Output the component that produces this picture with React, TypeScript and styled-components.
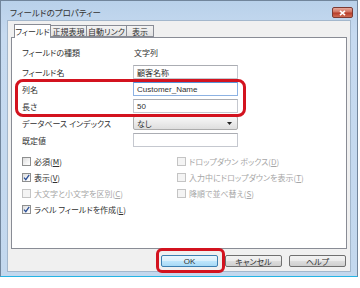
import styled, { createGlobalStyle } from "styled-components";

const GlobalStyle = createGlobalStyle`
  html, body {
    margin: 0;
    padding: 0;
    background: #ffffff;
  }
  body {
    font-family: "Noto Sans CJK JP", "Liberation Sans", sans-serif;
    font-size: 8px;
    color: #303030;
    font-feature-settings: "palt";
  }
`;

const fields = [
  { label: "フィールドの種類", kind: "text", value: "文字列" },
  { label: "フィールド名", kind: "input", value: "顧客名称" },
];

const highlighted = [
  { label: "列名", value: "Customer_Name", focused: true },
  { label: "長さ", value: "50", focused: false },
];

const leftChecks = [
  { text: "必須", key: "M", checked: false, disabled: false },
  { text: "表示", key: "V", checked: true, disabled: false },
  { text: "大文字と小文字を区別", key: "C", checked: false, disabled: true },
  { text: "ラベル フィールドを作成", key: "L", checked: true, disabled: false },
];

const rightChecks = [
  { text: "ドロップダウン ボックス", key: "D", checked: false, disabled: true },
  { text: "入力中にドロップダウンを表示", key: "T", checked: false, disabled: true },
  { text: "降順で並べ替え", key: "S", checked: false, disabled: true },
];

const tabs = [
  { label: "フィールド", width: 37, active: true },
  { label: "正規表現", width: 37, active: false },
  { label: "自動リンク", width: 41, active: false },
  { label: "表示", width: 28, active: false },
];

function Check({ text, k, checked, disabled }: { text: string; k: string; checked: boolean; disabled: boolean }) {
  return (
    <CheckRow $disabled={disabled}>
      <Box $disabled={disabled}>
        {checked ? (
          <svg width="7" height="7" viewBox="0 0 7 7">
            <path d="M1 3.6 L2.8 5.6 L6.2 0.9" fill="none" stroke="#2a4e96" strokeWidth="1.3" />
          </svg>
        ) : null}
      </Box>
      <span>
        {text}(<U>{k}</U>)
      </span>
    </CheckRow>
  );
}

function App() {
  return (
    <>
      <GlobalStyle />
      <Window>
        <TitleBar>
          <Title>フィールドのプロパティー</Title>
          <CloseButton>
            <svg width="7" height="6" viewBox="0 0 7 6">
              <path d="M1 0.8 L6 5.2 M6 0.8 L1 5.2" stroke="#ffffff" strokeWidth="1.6" />
            </svg>
          </CloseButton>
        </TitleBar>
        <Client>
          <TabRow>
            {tabs.map((t) => (
              <Tab key={t.label} $active={t.active} style={{ width: t.width }}>
                {t.label}
              </Tab>
            ))}
          </TabRow>
          <Panel>
            <Fields>
              {fields.map((f, i) => (
                <FieldRow key={f.label} $first={i === 0}>
                  <Label>{f.label}</Label>
                  {f.kind === "text" ? <Plain>{f.value}</Plain> : <Input>{f.value}</Input>}
                </FieldRow>
              ))}
              <Highlight>
                {highlighted.map((f) => (
                  <FieldRow key={f.label}>
                    <Label>{f.label}</Label>
                    <Input $focused={f.focused} $latin>
                      {f.value}
                    </Input>
                  </FieldRow>
                ))}
              </Highlight>
              <FieldRow>
                <Label>データベース インデックス</Label>
                <Select>
                  <span>なし</span>
                  <svg width="5" height="3" viewBox="0 0 5 3">
                    <path d="M0 0 H5 L2.5 3 Z" fill="#222" />
                  </svg>
                </Select>
              </FieldRow>
              <FieldRow>
                <Label>既定値</Label>
                <Input />
              </FieldRow>
            </Fields>
            <Checks>
              <CheckColumn>
                {leftChecks.map((c) => (
                  <Check key={c.key} text={c.text} k={c.key} checked={c.checked} disabled={c.disabled} />
                ))}
              </CheckColumn>
              <CheckColumn>
                {rightChecks.map((c) => (
                  <Check key={c.key} text={c.text} k={c.key} checked={c.checked} disabled={c.disabled} />
                ))}
              </CheckColumn>
            </Checks>
          </Panel>
          <ButtonRow>
            <Marked>
              <Button $default>OK</Button>
            </Marked>
            <Button>キャンセル</Button>
            <Button>ヘルプ</Button>
          </ButtonRow>
        </Client>
      </Window>
    </>
  );
}

export default App;

const Window = styled.div`
  box-sizing: border-box;
  width: 358px;
  height: 277px;
  display: flex;
  flex-direction: column;
  background: linear-gradient(180deg, #b9d1ea 0%, #c6daf0 12%, #c3d8ee 100%);
  border: 1px solid #71859b;
  border-bottom: 1px solid #25b4e4;
`;

const TitleBar = styled.div`
  height: 19px;
  display: flex;
  align-items: center;
  justify-content: space-between;
  padding: 0 4px 0 9px;
`;

const Title = styled.div`
  font-size: 8.5px;
  color: #333333;
  padding-top: 2px;
`;

const CloseButton = styled.div`
  box-sizing: border-box;
  width: 21px;
  height: 11px;
  margin-top: 4px;
  display: flex;
  align-items: center;
  justify-content: center;
  border: 1px solid #7c3a33;
  border-radius: 2px;
  background: linear-gradient(180deg, #e7a99c 0%, #d0715f 45%, #b63b28 55%, #cf6d55 100%);
`;

const Client = styled.div`
  flex: 1;
  margin: 0 6px 4px 6px;
  padding: 3px 3px 0 3px;
  background: #f0f0f0;
  border: 1px solid #a3b7cc;
  display: flex;
  flex-direction: column;
`;

const TabRow = styled.div`
  display: flex;
  height: 13px;
  padding-left: 3px;
  align-items: flex-end;
`;

const Tab = styled.div<{ $active?: boolean }>`
  box-sizing: border-box;
  height: ${(p) => (p.$active ? "14px" : "12px")};
  margin-bottom: ${(p) => (p.$active ? "-1px" : "0")};
  margin-right: -1px;
  position: relative;
  z-index: ${(p) => (p.$active ? 2 : 1)};
  display: flex;
  align-items: center;
  justify-content: center;
  border: 1px solid #898c95;
  border-bottom: ${(p) => (p.$active ? "none" : "1px solid #898c95")};
  background: ${(p) => (p.$active ? "#ffffff" : "linear-gradient(180deg, #f3f3f3, #e2e2e2)")};
  font-size: 8px;
  white-space: nowrap;
`;

const Panel = styled.div`
  box-sizing: border-box;
  height: 212px;
  background: #ffffff;
  border: 1px solid #898c95;
  padding: 7px 0 0 10px;
`;

const Fields = styled.div`
  display: flex;
  flex-direction: column;
  gap: 3px;
`;

const FieldRow = styled.div<{ $first?: boolean }>`
  display: grid;
  grid-template-columns: 111px 105px;
  align-items: center;
  height: 14px;
  margin-bottom: ${(p) => (p.$first ? "3px" : "0")};
`;

const Label = styled.div`
  white-space: nowrap;
`;

const Plain = styled.div`
  padding-left: 1px;
`;

const Input = styled.div<{ $focused?: boolean; $latin?: boolean }>`
  box-sizing: border-box;
  height: 14px;
  display: flex;
  align-items: center;
  padding-left: 3px;
  border: 1px solid ${(p) => (p.$focused ? "#8db2e3" : "#c5c8cf")};
  border-top-color: ${(p) => (p.$focused ? "#5794d8" : "#abadb3")};
  background: #ffffff;
  font-family: ${(p) =>
    p.$latin ? '"Liberation Sans", "Noto Sans CJK JP", sans-serif' : '"Noto Sans CJK JP", sans-serif'};
`;

const Highlight = styled.div`
  position: relative;
  width: 216px;
  display: flex;
  flex-direction: column;
  gap: 3px;

  &::after {
    content: "";
    position: absolute;
    top: -3px;
    bottom: -4px;
    left: -7px;
    right: -8px;
    border: 3px solid #d3131f;
    border-radius: 8px;
    pointer-events: none;
  }
`;

const Select = styled.div`
  box-sizing: border-box;
  height: 14px;
  display: flex;
  align-items: center;
  justify-content: space-between;
  padding: 0 5px 0 3px;
  border: 1px solid #acacac;
  border-radius: 2px;
  background: linear-gradient(180deg, #f7f7f7 0%, #ebebeb 50%, #dedede 100%);
`;

const Checks = styled.div`
  display: grid;
  grid-template-columns: 155px 1fr;
  margin-top: 6px;
`;

const CheckColumn = styled.div`
  display: flex;
  flex-direction: column;
`;

const CheckRow = styled.div<{ $disabled?: boolean }>`
  height: 16px;
  display: flex;
  align-items: center;
  gap: 3px;
  color: ${(p) => (p.$disabled ? "#a6a6a6" : "#303030")};
  white-space: nowrap;
`;

const Box = styled.div<{ $disabled?: boolean }>`
  box-sizing: border-box;
  width: 9px;
  height: 9px;
  display: flex;
  align-items: center;
  justify-content: center;
  border: 1px solid ${(p) => (p.$disabled ? "#c4c4c4" : "#8e8f8f")};
  background: ${(p) =>
    p.$disabled ? "#f4f4f4" : "linear-gradient(135deg, #dcdcdc 0%, #f4f4f4 60%, #ffffff 100%)"};
`;

const U = styled.span`
  text-decoration: underline;
`;

const ButtonRow = styled.div`
  display: flex;
  justify-content: flex-end;
  gap: 7px;
  margin-top: 6px;
  padding-right: 1px;
`;

const Marked = styled.div`
  position: relative;
  display: flex;

  &::after {
    content: "";
    position: absolute;
    top: -7px;
    bottom: -6px;
    left: -5px;
    right: -7px;
    border: 3px solid #d3131f;
    border-radius: 6px;
    pointer-events: none;
  }
`;

const Button = styled.div<{ $default?: boolean }>`
  box-sizing: border-box;
  width: 57px;
  height: 12px;
  display: flex;
  align-items: center;
  justify-content: center;
  border: 1px solid ${(p) => (p.$default ? "#3c7fb1" : "#707070")};
  border-radius: 2px;
  background: ${(p) =>
    p.$default
      ? "linear-gradient(180deg, #eaf6fd 0%, #d9f0fc 50%, #bee6fd 51%, #a7d9f5 100%)"
      : "linear-gradient(180deg, #f2f2f2 0%, #ebebeb 50%, #dddddd 51%, #cfcfcf 100%)"};
  font-family: "Liberation Sans", "Noto Sans CJK JP", sans-serif;
  font-size: 8px;
  color: #303030;
`;
